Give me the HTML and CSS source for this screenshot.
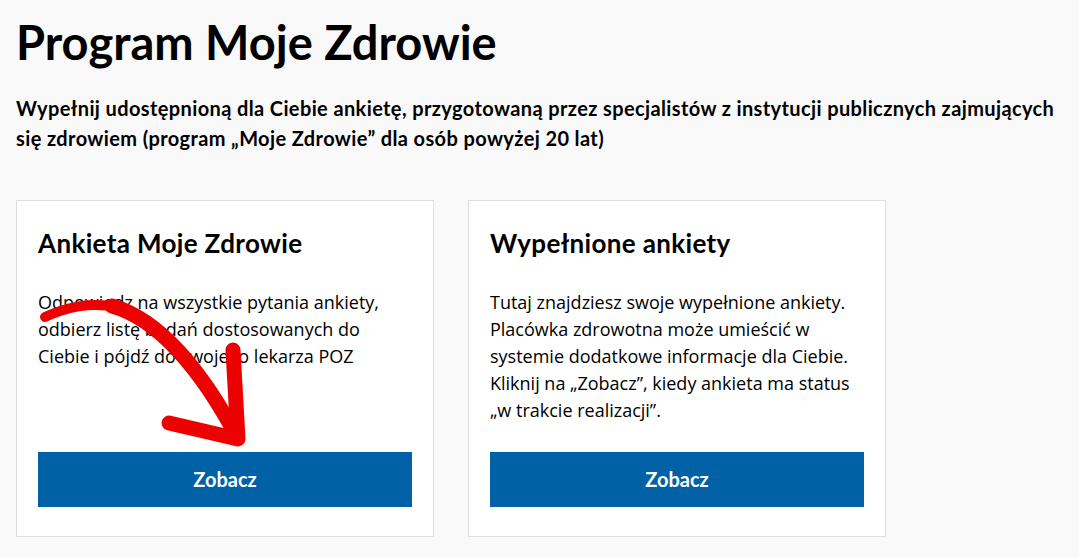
FILE: index.html
```html
<!DOCTYPE html>
<html lang="pl">
	<head>
		<meta charset="utf-8" />
		<title>Program Moje Zdrowie</title>
		<link rel="stylesheet" href="styles.css">
	</head>
	<body>
		<main class="page">
			<h1 class="page-title">Program Moje Zdrowie</h1>
			<p class="page-lead">Wypełnij udostępnioną dla Ciebie ankietę, przygotowaną przez specjalistów z instytucji publicznych zajmujących się zdrowiem (program „Moje Zdrowie” dla osób powyżej 20 lat)</p>

			<div class="cards">
				<section class="card card-main">
					<h2 class="card-title">Ankieta Moje Zdrowie</h2>
					<p class="card-text">Odpowiedz na wszystkie pytania ankiety, odbierz listę badań dostosowanych do Ciebie i pójdź do swojego lekarza POZ</p>
					<a class="btn" href="#">Zobacz</a>
					<!-- hand drawn arrow pointing at the button -->
					<svg class="arrow" width="260" height="260" viewBox="0 0 260 260">
						<path d="M28 116 C 50 106, 72 101, 100 106" fill="none" stroke="#ec0000" stroke-width="10" stroke-linecap="round"/>
						<path d="M95 105 C 142 118, 185 170, 220 236" fill="none" stroke="#ec0000" stroke-width="15" stroke-linecap="round"/>
						<path d="M152 222 L 221 238 L 216 149" fill="none" stroke="#ec0000" stroke-width="15" stroke-linecap="round" stroke-linejoin="round"/>
					</svg>
				</section>
				<section class="card">
					<h2 class="card-title">Wypełnione ankiety</h2>
					<p class="card-text">Tutaj znajdziesz swoje wypełnione ankiety. Placówka zdrowotna może umieścić w systemie dodatkowe informacje dla Ciebie. Kliknij na „Zobacz”, kiedy ankieta ma status „w trakcie realizacji”.</p>
					<a class="btn" href="#">Zobacz</a>
				</section>
			</div>
		</main>
	</body>
</html>
```

FILE: styles.css
```css
body {
	margin: 0;
	background: #f9f9f9;
	color: #000;
	font-family: "Open Sans", "Noto Sans", sans-serif;
}

.page {
	padding: 14px 16px 0 16px;
}

.page-title {
	margin: 0;
	font-family: Lato, "Noto Sans", sans-serif;
	font-weight: 700;
	font-size: 47px;
	line-height: 1.2;
}

.page-lead {
	margin: 23px 0 0 0;
	font-family: Lato, "Noto Sans", sans-serif;
	font-weight: 700;
	font-size: 20px;
	letter-spacing: 0.38px;
	line-height: 30px;
}

.cards {
	display: flex;
	gap: 34px;
	margin-top: 47px;
}

.card {
	position: relative;
	display: flex;
	flex-direction: column;
	width: 418px;
	box-sizing: border-box;
	padding: 27px 21px 29px 21px;
	background: #fff;
	border: 1px solid #dedede;
}

.card-title {
	margin: 0;
	font-family: Lato, "Noto Sans", sans-serif;
	font-weight: 700;
	font-size: 26px;
	letter-spacing: 0.35px;
	line-height: 1.2;
}

.card-text {
	margin: 29px 0 28px 0;
	font-size: 18px;
	line-height: 27px;
}

.btn {
	display: flex;
	align-items: center;
	justify-content: center;
	height: 55px;
	margin-top: auto;
	background: #0061a6;
	color: #fff;
	text-decoration: none;
	font-family: Lato, "Noto Sans", sans-serif;
	font-weight: 700;
	font-size: 20px;
}

.arrow {
	position: absolute;
	top: 0;
	left: 0;
	pointer-events: none;
}
```
